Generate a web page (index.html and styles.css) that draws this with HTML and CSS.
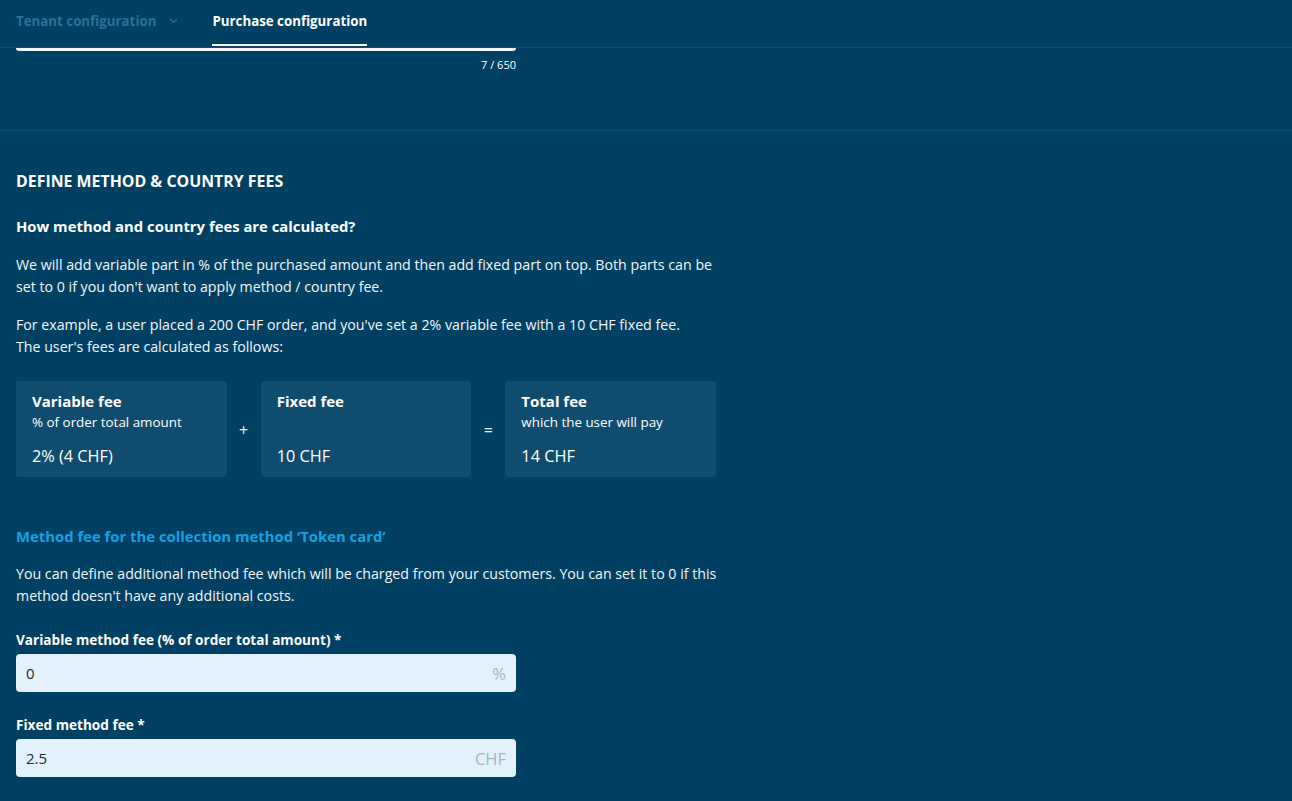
FILE: index.html
```html
<!DOCTYPE html>
<html lang="en">
<head>
<meta charset="utf-8">
<title>Purchase configuration</title>
<link rel="stylesheet" href="styles.css">
</head>
<body>
<header class="tabs">
  <div class="tab tab-muted">Tenant configuration
    <svg class="chev" width="9" height="6" viewBox="0 0 9 6"><path d="M1 1 L4.5 4.5 L8 1" fill="none" stroke="currentColor" stroke-width="1.1"/></svg>
  </div>
  <div class="tab tab-active">Purchase configuration</div>
</header>
<main>
  <section class="top-section">
    <div class="textarea-tail"></div>
    <div class="counter">7 / 650</div>
  </section>
  <section class="fees">
    <h2 class="section-title">DEFINE METHOD &amp; COUNTRY FEES</h2>
    <h3 class="sub-title">How method and country fees are calculated?</h3>
    <p class="text text-first">We will add variable part in % of the purchased amount and then add fixed part on top. Both parts can be set to 0 if you don't want to apply method / country fee.</p>
    <p class="text text-second">For example, a user placed a 200 CHF order, and you've set a 2% variable fee with a 10 CHF fixed fee. The user's fees are calculated as follows:</p>
    <div class="calc">
      <div class="card">
        <div class="card-title">Variable fee</div>
        <div class="card-sub">% of order total amount</div>
        <div class="card-value">2% (4 CHF)</div>
      </div>
      <div class="op">+</div>
      <div class="card">
        <div class="card-title">Fixed fee</div>
        <div class="card-sub">&nbsp;</div>
        <div class="card-value">10 CHF</div>
      </div>
      <div class="op">=</div>
      <div class="card">
        <div class="card-title">Total fee</div>
        <div class="card-sub">which the user will pay</div>
        <div class="card-value">14 CHF</div>
      </div>
    </div>
    <h3 class="accent-title">Method fee for the collection method ‘Token card’</h3>
    <p class="text text-method">You can define additional method fee which will be charged from your customers. You can set it to 0 if this method doesn't have any additional costs.</p>
    <div class="field field-first">
      <label class="label">Variable method fee (% of order total amount) *</label>
      <div class="input"><span class="value">0</span><span class="suffix">%</span></div>
    </div>
    <div class="field field-second">
      <label class="label">Fixed method fee *</label>
      <div class="input"><span class="value">2.5</span><span class="suffix">CHF</span></div>
    </div>
  </section>
</main>
</body>
</html>
```
FILE: styles.css
```css
* { box-sizing: border-box; }
html, body { margin: 0; padding: 0; }
body {
  background: #004062;
  color: #ffffff;
  font-family: "Open Sans", "Noto Sans", sans-serif;
  font-size: 14px;
  width: 1292px;
  height: 801px;
  overflow: hidden;
}
.tabs {
  display: flex;
  align-items: stretch;
  height: 48px;
  padding: 0 16px;
  border-bottom: 1px solid #0b4f72;
  gap: 34px;
}
.tab {
  display: flex;
  align-items: center;
  font-size: 13.3px;
  font-weight: 700;
  padding-bottom: 6px;
}
.tab-muted { color: #2e6f96; gap: 13px; }
.chev { color: #2e6f96; margin-top: 1px; }
.tab-active {
  color: #ffffff;
  position: relative;
}
.tab-active::after {
  content: "";
  position: absolute;
  left: 0; right: 0; bottom: 1px;
  height: 2px;
  background: #ffffff;
}
.top-section {
  padding: 0 16px;
  height: 83px;
  border-bottom: 1px solid #0b4f72;
}
.textarea-tail {
  width: 500px;
  height: 3px;
  background: #f2f6f8;
  border-radius: 0 0 4px 4px;
}
.counter {
  width: 500px;
  text-align: right;
  font-size: 11px;
  line-height: 16px;
  margin-top: 6px;
}
.fees { padding: 40px 16px 0; }
.section-title {
  margin: 0;
  font-size: 15.9px;
  font-weight: 700;
  line-height: 20px;
}
.sub-title {
  margin: 25px 0 0;
  font-size: 14.85px;
  font-weight: 700;
  line-height: 20px;
}
.text {
  margin: 0;
  width: 705px;
  line-height: 21.5px;
  font-size: 14.2px;
  color: #f3f7fa;
}
.text-first { margin-top: 18px; }
.text-second { margin-top: 17px; width: 688px; }
.calc {
  display: flex;
  align-items: center;
  width: 700px;
  margin-top: 24px;
}
.card {
  flex: 1;
  height: 96px;
  background: #0f4c6e;
  border-radius: 3px;
  padding: 12px 16px;
}
.op {
  width: 34px;
  text-align: center;
  font-size: 16px;
  color: #e6edf2;
  padding-top: 2px;
}
.card-title { font-size: 15px; font-weight: 700; line-height: 17px; }
.card-sub { font-size: 13.4px; line-height: 17px; margin-top: 4px; }
.card-value { font-size: 16.3px; line-height: 18px; margin-top: 16px; }
.accent-title {
  margin: 49px 0 0;
  font-size: 14.85px;
  font-weight: 700;
  color: #14a0e2;
  line-height: 20px;
}
.text-method { margin-top: 17px; }
.field { width: 500px; }
.field-first { margin-top: 26px; }
.field-second { margin-top: 25px; }
.label {
  display: block;
  font-size: 13.6px;
  font-weight: 700;
  line-height: 16px;
}
.input {
  margin-top: 6px;
  height: 38px;
  background: #e3f1fd;
  border-radius: 4px;
  display: flex;
  align-items: center;
  justify-content: space-between;
  padding: 0 10px;
  font-size: 15px;
}
.value { color: #1a2b3a; }
.suffix { color: #a7b5c2; font-size: 16.5px; }
```
